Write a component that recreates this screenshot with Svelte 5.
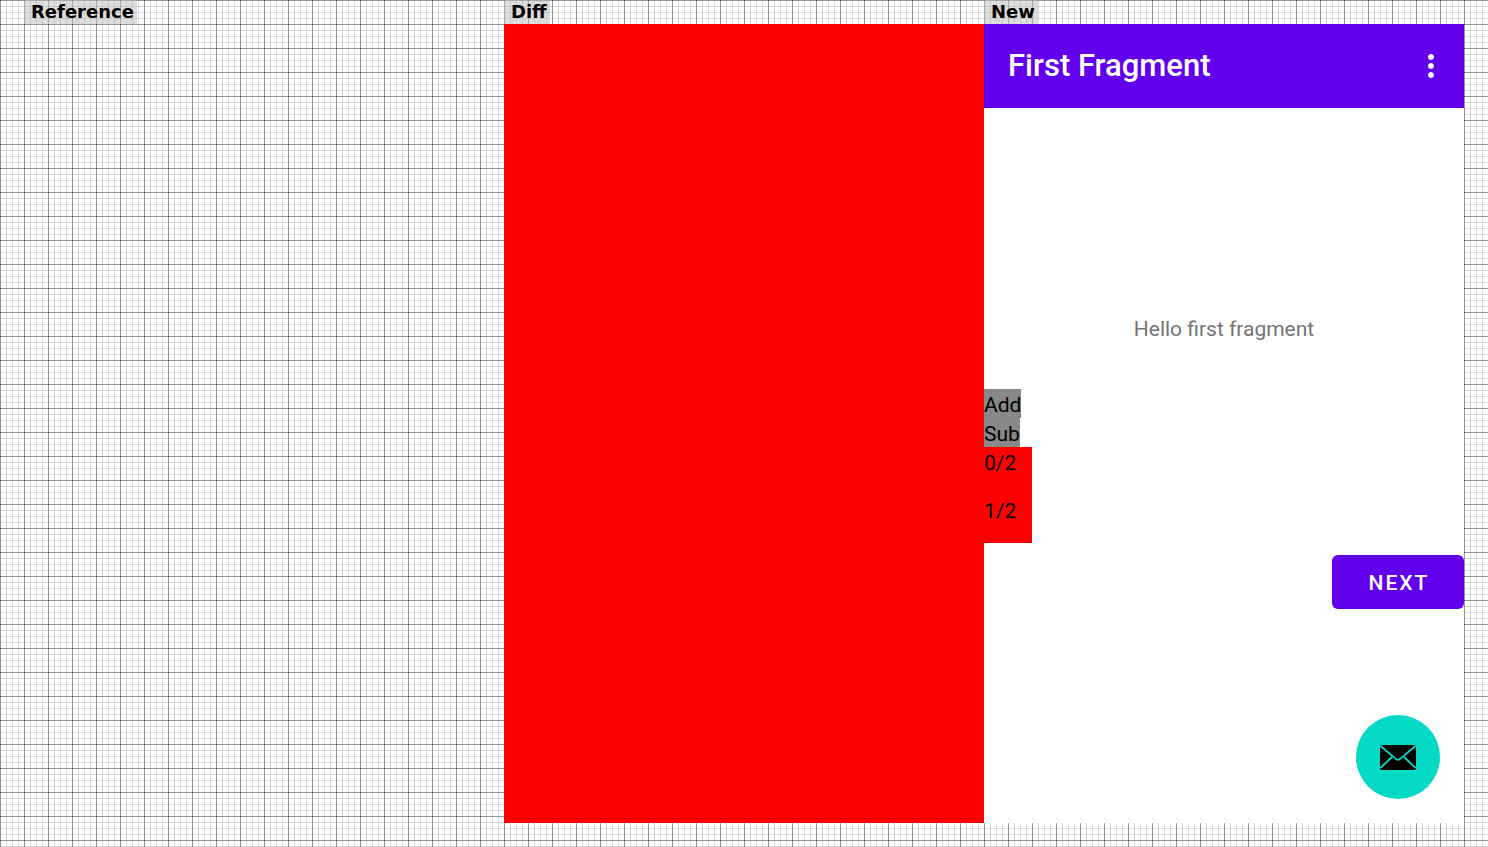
<script>
  const pages = ['0/2', '1/2'];
</script>

<main class="board">
  <section class="column">
    <h2 class="label">Reference</h2>
  </section>

  <section class="column">
    <h2 class="label">Diff</h2>
    <div class="frame diff"></div>
  </section>

  <section class="column">
    <h2 class="label">New</h2>
    <div class="frame device">
      <header class="appbar">
        <h1>First Fragment</h1>
        <button class="more" aria-label="More options">
          <svg width="36" height="36" viewBox="0 0 24 24" fill="currentColor" aria-hidden="true">
            <path d="M12 8c1.1 0 2-.9 2-2s-.9-2-2-2-2 .9-2 2 .9 2 2 2zm0 2c-1.1 0-2 .9-2 2s.9 2 2 2 2-.9 2-2-.9-2-2-2zm0 6c-1.1 0-2 .9-2 2s.9 2 2 2 2-.9 2-2-.9-2-2-2z" />
          </svg>
        </button>
      </header>

      <div class="content">
        <p class="hello">Hello first fragment</p>
        <button class="next">NEXT</button>

        <div class="pager">
          <button class="step">Add</button>
          <button class="step">Sub</button>
          {#each pages as page}
            <div class="page">{page}</div>
          {/each}
        </div>

        <button class="fab" aria-label="Send mail">
          <svg width="36" height="26" viewBox="0 0 36 26" aria-hidden="true">
            <rect y="1" width="36" height="25" rx="1.5" fill="#000" />
            <path d="M.3 1.8 15.2 14.4Q18 17.2 20.8 14.4L35.7 1.8M.3 24 12 13M35.7 24 24 13" fill="none" stroke="#03dac5" stroke-width="1.8" />
          </svg>
        </button>
      </div>
    </div>
  </section>
</main>

<style>
  :global(body) {
    margin: 0;
  }

  .board {
    box-sizing: border-box;
    min-height: 100vh;
    padding: 0 24px 24px;
    display: grid;
    grid-template-columns: repeat(3, 1fr);
    font-family: Roboto, sans-serif;
    background-color: #fff;
    background-image:
      linear-gradient(to right, rgba(0, 0, 0, 0.32) 1px, transparent 1px),
      linear-gradient(to bottom, rgba(0, 0, 0, 0.32) 1px, transparent 1px),
      linear-gradient(to right, rgba(0, 0, 0, 0.13) 1px, transparent 1px),
      linear-gradient(to bottom, rgba(0, 0, 0, 0.13) 1px, transparent 1px);
    background-size: 24px 24px, 24px 24px, 6px 6px, 6px 6px;
  }

  .column {
    display: flex;
    flex-direction: column;
    align-items: flex-start;
  }

  .label {
    margin: 0;
    padding: 0 3px 0 7px;
    font: bold 18px/24px "DejaVu Sans", sans-serif;
    color: #000;
    background: rgba(187, 187, 187, 0.5);
  }

  .frame {
    flex: 1;
    align-self: stretch;
  }

  .diff {
    background: #f00;
  }

  .device {
    display: flex;
    flex-direction: column;
    background: #fff;
  }

  .appbar {
    height: 84px;
    padding: 0 15px 0 24px;
    display: flex;
    align-items: center;
    justify-content: space-between;
    color: #fff;
    background: #6200ee;
  }

  h1 {
    margin: 0;
    font-size: 31px;
    font-weight: 500;
    line-height: 36px;
  }

  button {
    border: 0;
    font-family: inherit;
    cursor: pointer;
  }

  .more {
    display: flex;
    padding: 0;
    color: inherit;
    background: none;
  }

  .content {
    position: relative;
    flex: 1;
    display: flex;
    flex-direction: column;
    align-items: center;
    justify-content: space-evenly;
  }

  .hello {
    margin: 0;
    padding-top: 4px;
    font-size: 21px;
    line-height: 25px;
    color: #757575;
  }

  .next {
    align-self: flex-end;
    min-width: 132px;
    height: 54px;
    margin: 9px 0;
    padding: 2px 0 0 2px;
    border-radius: 6px;
    font-size: 21px;
    font-weight: 500;
    letter-spacing: 2px;
    color: #fff;
    background: #6200ee;
  }

  .pager {
    position: absolute;
    left: 0;
    top: 50%;
    transform: translateY(-50%);
    display: flex;
    flex-direction: column;
    align-items: flex-start;
    font-size: 21px;
    line-height: 25px;
    color: #000;
  }

  .step {
    padding: 4px 0 0;
    font-size: inherit;
    line-height: inherit;
    color: inherit;
    background: #888;
  }

  .page {
    width: 48px;
    height: 48px;
    line-height: 32px;
    background: #f00;
  }

  .fab {
    position: absolute;
    right: 24px;
    bottom: 24px;
    width: 84px;
    height: 84px;
    padding: 0;
    display: flex;
    align-items: center;
    justify-content: center;
    border-radius: 50%;
    background: #03dac5;
  }
</style>
